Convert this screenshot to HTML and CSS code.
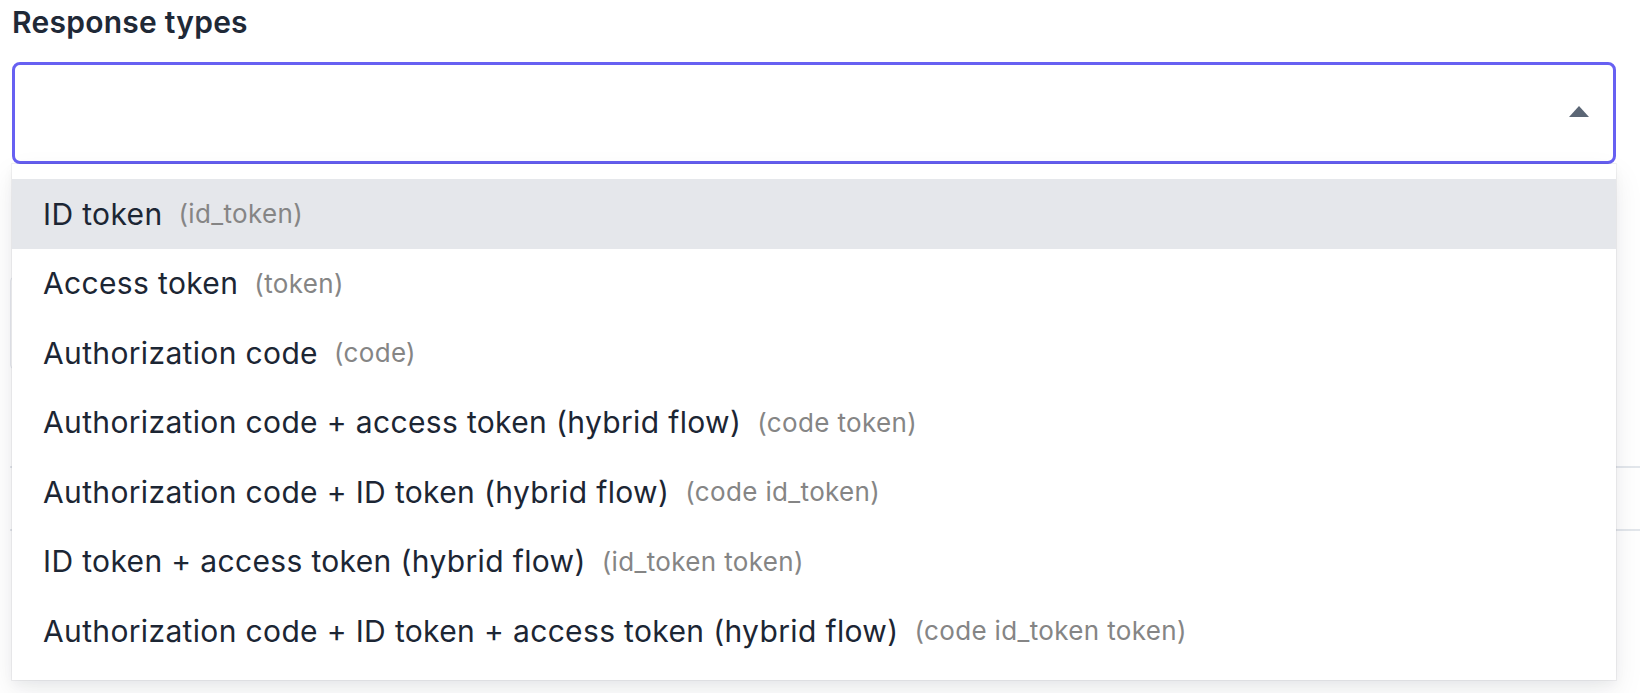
FILE: index.html
```html
<!DOCTYPE html>
<html lang="en">
<head>
<meta charset="utf-8">
<title>Response types</title>
<link rel="stylesheet" href="styles.css">
</head>
<body>
<div class="page">
  <label class="field-label">Response types</label>
  <div class="select-wrap">
    <div class="select">
      <svg class="caret" width="20" height="11" viewBox="0 0 20 11"><path d="M0 11 L10 0 L20 11 Z" fill="#5b6675"/></svg>
    </div>
    <ul class="menu">
      <li class="opt active"><span class="main">ID token</span><span class="code">(id_token)</span></li>
      <li class="opt"><span class="main">Access token</span><span class="code">(token)</span></li>
      <li class="opt"><span class="main">Authorization code</span><span class="code">(code)</span></li>
      <li class="opt"><span class="main">Authorization code + access token (hybrid flow)</span><span class="code">(code token)</span></li>
      <li class="opt"><span class="main">Authorization code + ID token (hybrid flow)</span><span class="code">(code id_token)</span></li>
      <li class="opt"><span class="main">ID token + access token (hybrid flow)</span><span class="code">(id_token token)</span></li>
      <li class="opt"><span class="main">Authorization code + ID token + access token (hybrid flow)</span><span class="code">(code id_token token)</span></li>
    </ul>
  </div>
  <div class="under">
    <div class="under-box"></div>
    <div class="under-rows">
      <div class="under-row"></div>
      <div class="under-row"></div>
    </div>
  </div>
</div>
</body>
</html>
```
FILE: styles.css
```css
html, body {
  margin: 0;
  padding: 0;
  background: #ffffff;
  font-family: "Inter", "Noto Sans", sans-serif;
  color: #1c2634;
}
.page {
  width: 1640px;
  height: 693px;
  overflow: hidden;
  padding: 4px 0 0 12px;
  box-sizing: border-box;
}
.field-label {
  display: block;
  font-size: 30px;
  line-height: 36px;
  font-weight: 600;
  color: #1f2937;
  letter-spacing: 0.25px;
}
.select-wrap {
  position: relative;
  margin-top: 22px;
  margin-right: 24px;
}
.select {
  height: 102px;
  box-sizing: border-box;
  border: 3px solid #6760f2;
  border-radius: 8px;
  background: #fff;
  display: flex;
  align-items: center;
  justify-content: flex-end;
  padding-right: 24px;
}
.caret {
  display: block;
  margin-top: -4px;
}
.menu {
  position: absolute;
  z-index: 5;
  left: 0;
  right: 0;
  top: 102px;
  margin: 0;
  list-style: none;
  padding: 15px 0 14px;
  background: #fff;
  box-shadow: 0 0 0 1px rgba(17, 24, 39, 0.05), 0 12px 28px rgba(17, 24, 39, 0.08), 0 4px 10px rgba(17, 24, 39, 0.04);
}
.opt {
  height: 69.5px;
  display: flex;
  align-items: center;
  padding-left: 31px;
  font-size: 30px;
  letter-spacing: 0.35px;
  color: #1c2634;
  white-space: nowrap;
}
.opt.active {
  background: #e5e7eb;
}
.code {
  margin-left: 16px;
  font-size: 26px;
  letter-spacing: 0.35px;
  color: #858585;
}
.under {
  margin-left: -2px;
  margin-top: 113px;
}
.under-box {
  height: 90px;
  margin-right: 24px;
  border: 1px solid #e6e9ee;
  border-radius: 4px;
}
.under-rows {
  margin-top: 97px;
}
.under-row {
  height: 61px;
  border-top: 2px solid #e3e7ec;
}
```
